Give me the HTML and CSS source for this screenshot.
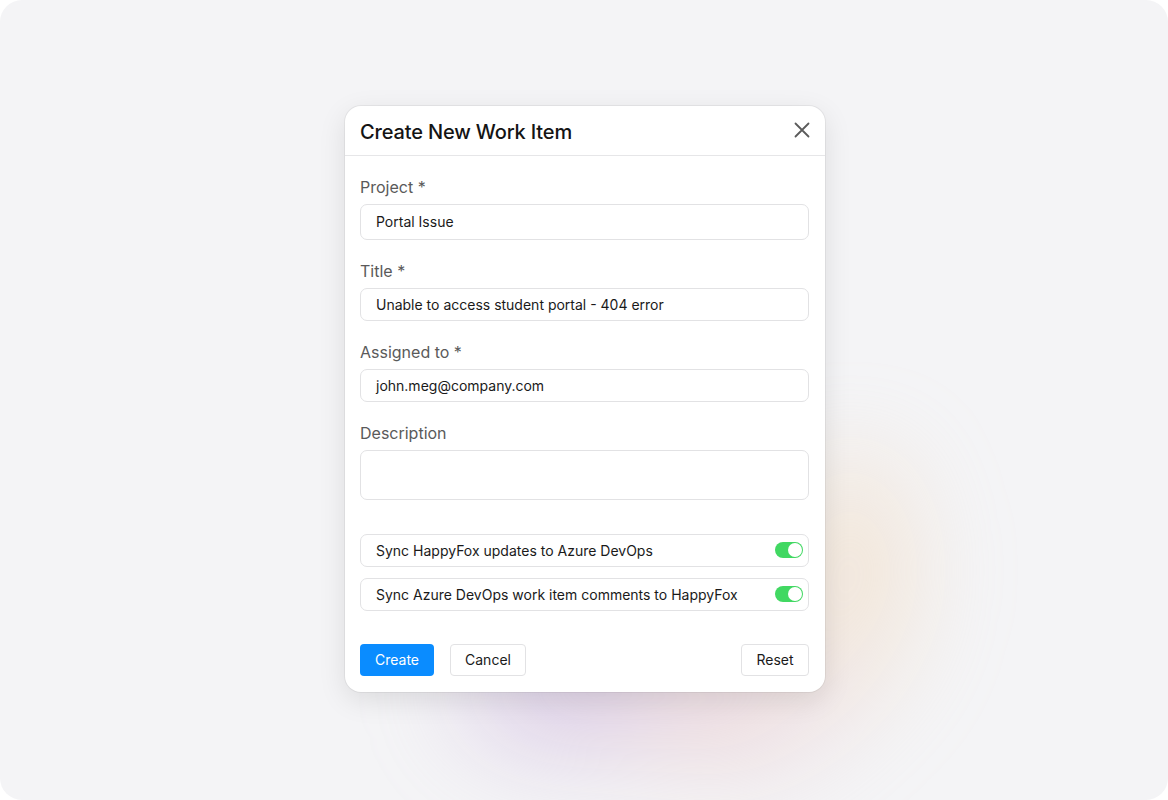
FILE: index.html
```html
<!DOCTYPE html>
<html lang="en">
<head>
    <meta charset="UTF-8">
    <meta name="viewport" content="width=device-width, initial-scale=1.0">
    <title>Create New Work Item</title>
    <link rel="stylesheet" href="styles.css">
</head>
<body>

<div class="stage">
    <div class="glow"></div>

    <div class="modal">
        <div class="modal-header">
            <h1>Create New Work Item</h1>
            <button class="close-btn" aria-label="Close">
                <svg width="16" height="16" viewBox="0 0 16 16">
                    <path d="M1.5 1.5 L14.5 14.5 M14.5 1.5 L1.5 14.5" stroke="#5b5b5b" stroke-width="1.8" stroke-linecap="round" fill="none"/>
                </svg>
            </button>
        </div>

        <div class="modal-body">
            <div class="form-group">
                <label for="project">Project *</label>
                <div class="field field-tall" id="project">Portal Issue</div>
            </div>
            <div class="form-group">
                <label for="title">Title *</label>
                <div class="field" id="title">Unable to access student portal - 404 error</div>
            </div>
            <div class="form-group">
                <label for="assigned">Assigned to *</label>
                <div class="field" id="assigned">john.meg@company.com</div>
            </div>
            <div class="form-group">
                <label for="description">Description</label>
                <div class="field field-area" id="description"></div>
            </div>

            <div class="toggles">
                <div class="toggle-row">
                    <span>Sync HappyFox updates to Azure DevOps</span>
                    <span class="switch on"><span class="knob"></span></span>
                </div>
                <div class="toggle-row">
                    <span>Sync Azure DevOps work item comments to HappyFox</span>
                    <span class="switch on"><span class="knob"></span></span>
                </div>
            </div>

            <div class="actions">
                <button class="btn btn-primary">Create</button>
                <button class="btn btn-cancel">Cancel</button>
                <button class="btn btn-reset">Reset</button>
            </div>
        </div>
    </div>
</div>

</body>
</html>
```

FILE: styles.css
```css
body {
    margin: 0;
    background: #ffffff;
    font-family: Inter, "Noto Sans", Arial, sans-serif;
}
.stage {
    position: relative;
    height: 800px;
    box-sizing: border-box;
    padding: 106px 0 0 2px;
    border-radius: 22px;
    background: #f4f4f6;
    overflow: hidden;
    display: flex;
    align-items: flex-start;
    justify-content: center;
}
.glow {
    position: absolute;
    left: 420px;
    top: 430px;
    width: 560px;
    height: 380px;
    background:
        radial-gradient(ellipse 150px 110px at 140px 260px, rgba(195, 165, 215, 0.5), transparent),
        radial-gradient(ellipse 170px 120px at 300px 270px, rgba(228, 185, 190, 0.45), transparent),
        radial-gradient(ellipse 110px 180px at 430px 140px, rgba(240, 208, 170, 0.45), transparent);
    filter: blur(36px);
}
.modal {
    position: relative;
    width: 480px;
    background: #ffffff;
    border-radius: 16px;
    box-shadow: 0 0 0 1px rgba(0, 0, 0, 0.05), 0 8px 28px rgba(0, 0, 0, 0.10);
}
.modal-header {
    display: flex;
    align-items: center;
    justify-content: space-between;
    height: 49px;
    padding: 0 14px 0 15px;
    border-bottom: 1px solid #e6e6e8;
}
.modal-header h1 {
    margin: 0;
    font-size: 20px;
    font-weight: 500;
    color: #141414;
    letter-spacing: -0.15px;
    padding-top: 2px;
}
.close-btn {
    border: none;
    background: none;
    padding: 0;
    width: 18px;
    height: 18px;
    display: flex;
    align-items: center;
    justify-content: center;
    margin-top: -2px;
}
.modal-body {
    padding: 21px 16px 16px 15px;
}
.form-group {
    margin-bottom: 21px;
}
.form-group label {
    display: block;
    font-size: 16px;
    line-height: 20px;
    color: #5a5a5a;
    margin-bottom: 7px;
}
.field {
    box-sizing: border-box;
    height: 33px;
    border: 1px solid #e2e2e4;
    border-radius: 7px;
    padding: 0 15px 1px;
    font-size: 14px;
    color: #1a1a1a;
    display: flex;
    align-items: center;
}
.field-tall {
    height: 36px;
}
.field-area {
    height: 50px;
}
.toggles {
    margin-top: 34px;
    display: flex;
    flex-direction: column;
    gap: 11px;
}
.toggle-row {
    box-sizing: border-box;
    height: 33px;
    border: 1px solid #e2e2e4;
    border-radius: 7px;
    padding: 0 5px 1px 15px;
    font-size: 14px;
    color: #1a1a1a;
    display: flex;
    align-items: center;
    justify-content: space-between;
}
.switch {
    position: relative;
    width: 28px;
    height: 16px;
    border-radius: 8px;
    background: #e0e0e0;
}
.switch.on {
    background: #41d862;
}
.knob {
    position: absolute;
    top: 1px;
    right: 1px;
    width: 14px;
    height: 14px;
    border-radius: 50%;
    background: #ffffff;
}
.actions {
    display: flex;
    gap: 16px;
    margin-top: 33px;
}
.btn {
    height: 32px;
    border-radius: 4px;
    font-family: Inter, "Noto Sans", Arial, sans-serif;
    font-size: 14px;
    padding: 0 0 1px;
    cursor: pointer;
}
.btn-primary {
    width: 74px;
    border: none;
    background: #0a8cff;
    color: #ffffff;
}
.btn-cancel {
    width: 76px;
    border: 1px solid #e2e2e4;
    background: #ffffff;
    color: #1a1a1a;
}
.btn-reset {
    width: 68px;
    margin-left: auto;
    border: 1px solid #e2e2e4;
    background: #ffffff;
    color: #1a1a1a;
}
```
